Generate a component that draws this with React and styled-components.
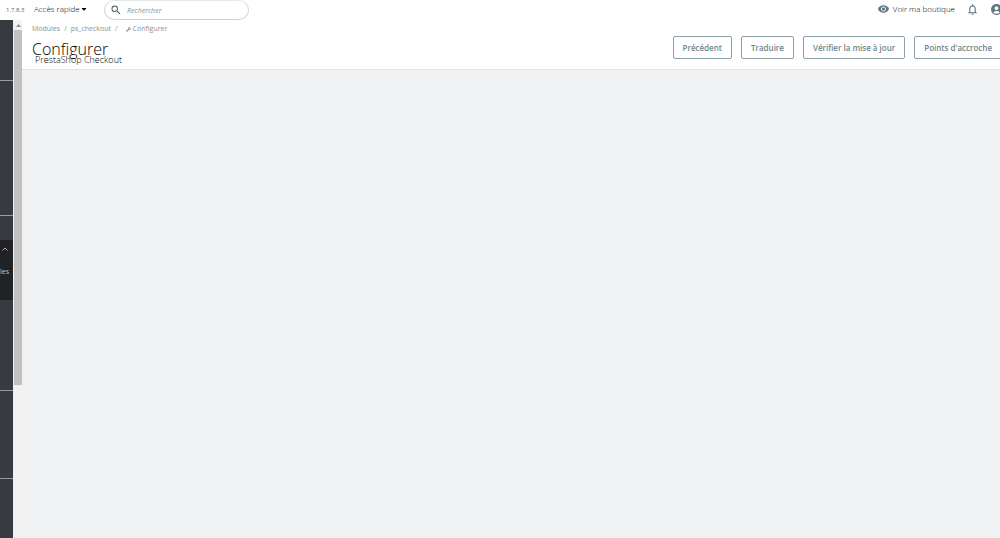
import styled, { createGlobalStyle } from 'styled-components';
import { MdAccountCircle, MdNotificationsNone, MdSearch } from 'react-icons/md';
import { FaCaretDown, FaWrench } from 'react-icons/fa';

const actions = ['Précédent', 'Traduire', 'Vérifier la mise à jour', "Points d'accroche"];

const App = () => {
    return (
        <Page>
            <GlobalStyle />
            <TopBar>
                <Version>1.7.8.3</Version>
                <QuickAccess type="button">
                    Accès rapide
                    <FaCaretDown size={8} />
                </QuickAccess>
                <Search>
                    <MdSearch size={12} />
                    <SearchInput type="text" placeholder="Rechercher" aria-label="Rechercher" />
                </Search>
                <TopLinks>
                    <ShopLink href="#shop">
                        <svg width="11" height="8" viewBox="0 0 22 16" fill="none">
                            <path d="M0 8C2 3 6 0.5 11 0.5S20 3 22 8C20 13 16 15.5 11 15.5S2 13 0 8Z" fill="#5d7780" />
                            <circle cx="11" cy="8" r="4.2" stroke="#fff" strokeWidth="1.8" />
                        </svg>
                        <span>Voir ma boutique</span>
                    </ShopLink>
                    <IconButton type="button" aria-label="Notifications">
                        <MdNotificationsNone size={13} />
                    </IconButton>
                    <IconButton type="button" aria-label="Compte">
                        <MdAccountCircle size={13} />
                    </IconButton>
                </TopLinks>
            </TopBar>
            <Body>
                <Sidebar>
                    <MenuGroup $height={61} />
                    <MenuGroup $height={135} />
                    <MenuGap />
                    <ActiveItem>
                        <svg width="6" height="4" viewBox="0 0 6 4" fill="none" stroke="#a9adb2">
                            <path d="M0.5 3.5L3 1L5.5 3.5" />
                        </svg>
                        <span>les</span>
                    </ActiveItem>
                    <MenuGroup $height={91} />
                    <MenuGroup $height={88} />
                </Sidebar>
                <ScrollTrack>
                    <ScrollArrow>
                        <svg width="5" height="3" viewBox="0 0 5 3" fill="#8b8e90">
                            <path d="M0 3L2.5 0L5 3Z" />
                        </svg>
                    </ScrollArrow>
                    <ScrollThumb />
                </ScrollTrack>
                <Main>
                    <PageHead>
                        <div>
                            <Breadcrumb>
                                <a href="#modules">Modules</a>
                                <span>/</span>
                                <a href="#checkout">ps_checkout</a>
                                <span>/</span>
                                <CurrentCrumb href="#configure">
                                    <FaWrench size={5} />
                                    Configurer
                                </CurrentCrumb>
                            </Breadcrumb>
                            <Title>Configurer</Title>
                            <Subtitle>PrestaShop Checkout</Subtitle>
                        </div>
                        <Toolbar>
                            {actions.map((label) => (
                                <ToolbarButton key={label} type="button">{label}</ToolbarButton>
                            ))}
                        </Toolbar>
                    </PageHead>
                </Main>
            </Body>
        </Page>
    )
}

const GlobalStyle = createGlobalStyle`
    * {
        box-sizing: border-box;
    }

    body {
        margin: 0;
        overflow: hidden;
        background: #eff1f2;
        font-family: "Open Sans", "Noto Sans", sans-serif;
        color: #363a41;
    }

    a {
        color: inherit;
        text-decoration: none;
    }

    button, input {
        font-family: inherit;
        color: inherit;
    }

    svg {
        flex: none;
    }
`

const Page = styled.div`
    display: flex;
    flex-direction: column;
    min-height: 100vh;
`

const TopBar = styled.header`
    display: flex;
    align-items: flex-start;
    height: 20px;
    padding-left: 6px;
    background: #fff;
`

const Version = styled.span`
    width: 28px;
    font-size: 6px;
    line-height: 20px;
    color: #5c6065;
`

const QuickAccess = styled.button`
    display: flex;
    align-items: center;
    width: 70px;
    padding: 0;
    border: 0;
    background: none;
    font-size: 8px;
    font-weight: 300;
    line-height: 18px;
    white-space: nowrap;
    color: #000;
`

const Search = styled.div`
    display: flex;
    align-items: center;
    gap: 5px;
    width: 145px;
    height: 20px;
    padding: 0 5px;
    border: 1px solid #c9d6d9;
    border-top-color: #e3eaec;
    border-radius: 10px;
    color: #4b5a60;
`

const SearchInput = styled.input`
    flex: 1;
    min-width: 0;
    padding: 0;
    border: 0;
    outline: 0;
    background: none;
    font-size: 7px;
    font-style: italic;

    &::placeholder {
        color: #7d9198;
        opacity: 1;
    }
`

const TopLinks = styled.nav`
    display: flex;
    align-items: center;
    gap: 11px;
    height: 18px;
    margin-left: auto;
    margin-right: -3px;
    color: #5d7780;
`

const ShopLink = styled.a`
    display: flex;
    align-items: center;
    gap: 4px;
    font-size: 8px;
    font-weight: 300;
    line-height: 10px;

    span {
        color: #000;
    }
`

const IconButton = styled.button`
    display: flex;
    padding: 0;
    border: 0;
    background: none;
`

const Body = styled.div`
    display: flex;
    flex: 1;
`

const Sidebar = styled.aside`
    flex: none;
    width: 13px;
    background: #363a41;
`

const MenuGroup = styled.div`
    height: ${({ $height }) => $height}px;
    border-bottom: 1px solid #989b9f;
`

const MenuGap = styled.div`
    height: 24px;
`

const ActiveItem = styled.div`
    display: flex;
    flex-direction: column;
    align-items: flex-start;
    gap: 16px;
    height: 60px;
    padding: 7px 0 0 2px;
    background: #202226;
    font-size: 7px;
    line-height: 10px;
    color: #c4c6c8;

    span {
        margin-left: -2px;
    }
`

const ScrollTrack = styled.div`
    flex: none;
    width: 9px;
    padding-left: 1px;
    background: #f1f1f1;
`

const ScrollArrow = styled.div`
    display: flex;
    align-items: center;
    justify-content: center;
    height: 10px;
`

const ScrollThumb = styled.div`
    height: 355px;
    background: #c1c1c1;
`

const Main = styled.main`
    flex: 1;
    min-width: 0;
`

const PageHead = styled.div`
    display: flex;
    justify-content: space-between;
    height: 50px;
    padding-left: 10px;
    border-bottom: 1px solid #dfe1e3;
    background: #fff;
`

const Breadcrumb = styled.nav`
    display: flex;
    gap: 4px;
    padding-top: 4px;
    font-size: 7px;
    line-height: 10px;
    color: #8b9195;
`

const CurrentCrumb = styled.a`
    display: flex;
    align-items: center;
    gap: 2px;
    padding-left: 4px;
`

const Title = styled.h1`
    margin: 6px 0 0;
    font-size: 16px;
    font-weight: 300;
    line-height: 18px;
    color: #000;
`

const Subtitle = styled.h2`
    margin: -3px 0 0 3px;
    font-size: 9px;
    font-weight: 300;
    line-height: 10px;
    color: #000;
`

const Toolbar = styled.div`
    display: flex;
    gap: 9px;
    margin: 16px -2px 0 0;
`

const ToolbarButton = styled.button`
    height: 23px;
    padding: 0 9px;
    border: 1px solid #8ba0a7;
    border-radius: 2px;
    background: #fff;
    font-size: 8px;
    font-weight: 600;
    white-space: nowrap;
    color: #6c868e;
`

export default App;
